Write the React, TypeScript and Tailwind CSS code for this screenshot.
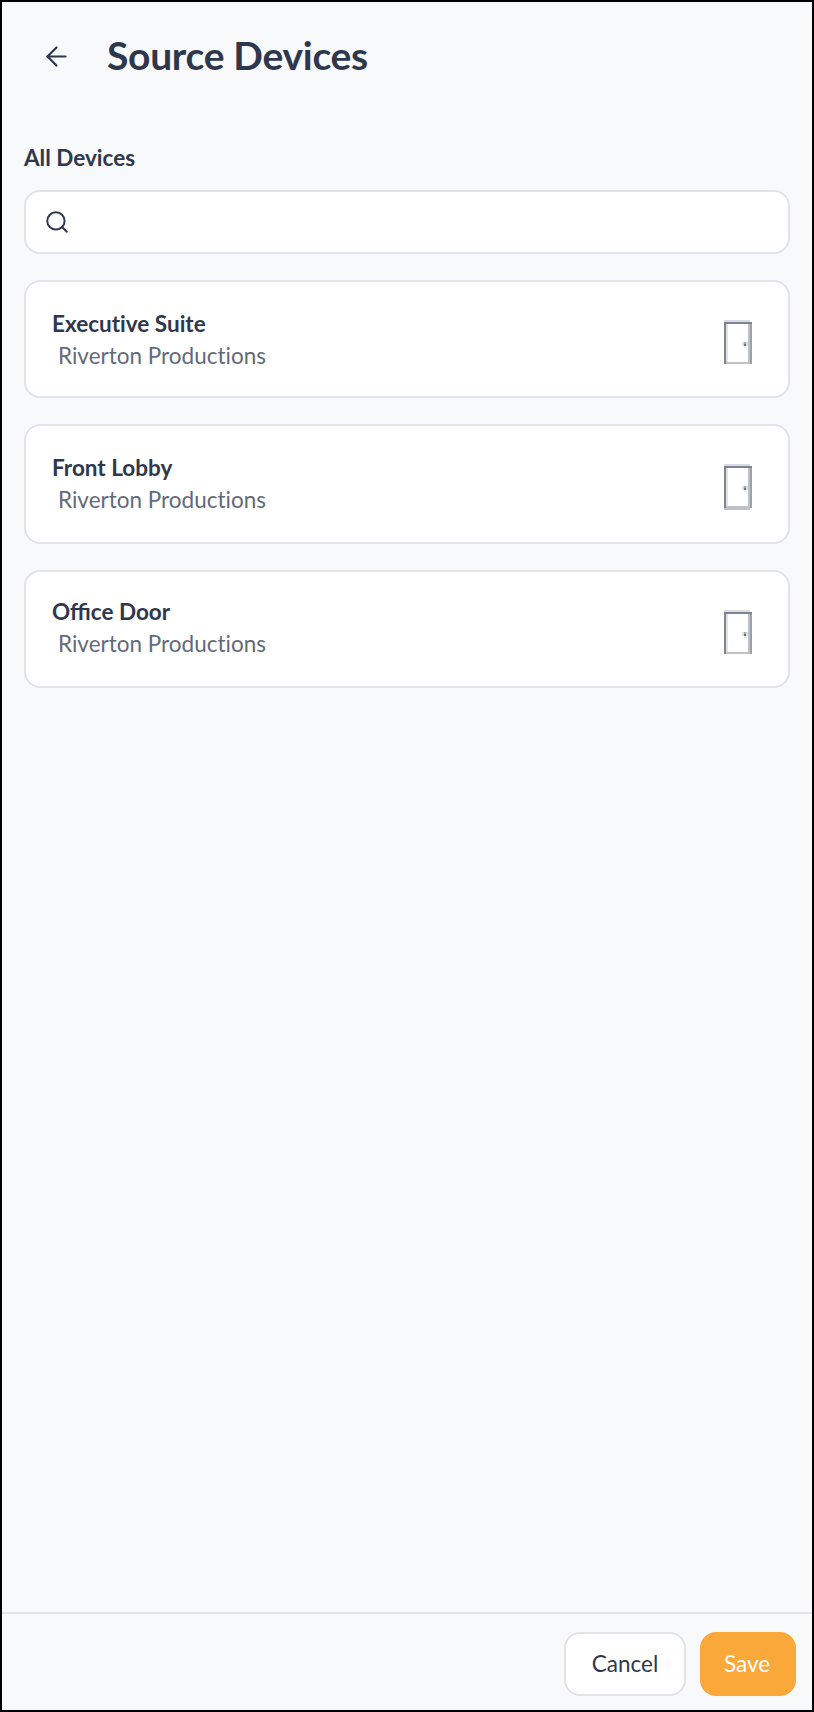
import { ArrowLeft, Search } from 'lucide-react';

const devices = [
  {
    name: 'Executive Suite',
    location: 'Riverton Productions',
    card: 'h-[118px]',
    text: '[font-variant-ligatures:none]',
    tallIcon: false,
  },
  { name: 'Front Lobby', location: 'Riverton Productions', card: 'h-[120px]', text: '', tallIcon: true },
  { name: 'Office Door', location: 'Riverton Productions', card: 'h-[118px]', text: '-mt-0.5', tallIcon: false },
];

function DoorIcon({ tall }: { tall: boolean }) {
  return (
    <svg width="28" height="46" viewBox="0 0 28 46" fill="none" aria-hidden="true">
      <path d="M0 1h26" stroke="#d9dce0" strokeWidth="2" />
      <path d="M3 4v38" stroke="#dfe1e4" strokeWidth="2" />
      <path d="M25 4v40" stroke="#bec2c6" strokeWidth="2" />
      <path d="M2 43h24" stroke="#bec2c6" strokeWidth="2" />
      {tall && <path d="M0 45h26" stroke="#bec2c6" strokeWidth="2" />}
      <path d="M27 4v40" stroke="#9aa1aa" strokeWidth="2" />
      <path d="M1 2v42M0 3h28" stroke="#7b8492" strokeWidth="2" />
      <path d="M18 22h6v4h-6z" fill="#dcdee3" />
      <path d="M20 26h2v2h-2z" fill="#e8e9ec" />
      <path d="M20 22h2v4h-2z" fill="#a5a9b3" />
      <path d="M20 24h2v2h-2z" fill="#6c7280" />
    </svg>
  );
}

function DeviceCard({ device }: { device: (typeof devices)[number] }) {
  return (
    <li
      className={`flex items-start justify-between rounded-2xl border-2 border-[#e1e3e9] bg-white pt-[26px] pr-9 pl-[26px] ${device.card}`}
    >
      <div className={`text-[22.5px] leading-8 ${device.text}`}>
        <h3 className="font-bold">{device.name}</h3>
        <p className="pl-1.5 text-[#636a79] [font-variant-ligatures:none]">{device.location}</p>
      </div>
      <div className="pt-3">
        <DoorIcon tall={device.tallIcon} />
      </div>
    </li>
  );
}

export default function SourceDevices() {
  return (
    <main className="flex h-[1712px] w-[814px] flex-col border-2 border-black bg-[#f8f9fb] font-['Lato',sans-serif] text-[#2f374c]">
      <header className="flex h-[108px] items-center pl-[38px]">
        <button type="button" aria-label="Back" className="flex size-8 items-center justify-center">
          <ArrowLeft size={31} strokeWidth={1.7} />
        </button>
        <h1 className="mb-0.5 ml-[35px] text-[39px] leading-[48px] font-bold tracking-[-0.3px]">Source Devices</h1>
      </header>

      <section className="flex-1 px-[22px] pt-8">
        <h2 className="text-[22.5px] leading-8 font-bold">All Devices</h2>
        <label className="mt-4 flex h-16 items-center rounded-2xl border-2 border-[#e1e3e9] bg-white px-[18px]">
          <Search size={26} strokeWidth={1.8} />
          <input type="text" aria-label="Search devices" className="ml-3 flex-1 text-[22px] outline-none" />
        </label>

        <ul className="mt-[26px] flex flex-col gap-[26px]">
          {devices.map((device) => (
            <DeviceCard key={device.name} device={device} />
          ))}
        </ul>
      </section>

      <footer className="flex h-[98px] justify-end gap-3.5 border-t-2 border-[#e1e3e9] pt-[18px] pr-4 text-[22.5px]">
        <button type="button" className="h-16 w-[122px] rounded-2xl border-2 border-[#e1e3e9] bg-white">
          Cancel
        </button>
        <button type="button" className="h-16 w-24 rounded-2xl bg-[#faa83a] pr-0.5 text-white">
          Save
        </button>
      </footer>
    </main>
  );
}
